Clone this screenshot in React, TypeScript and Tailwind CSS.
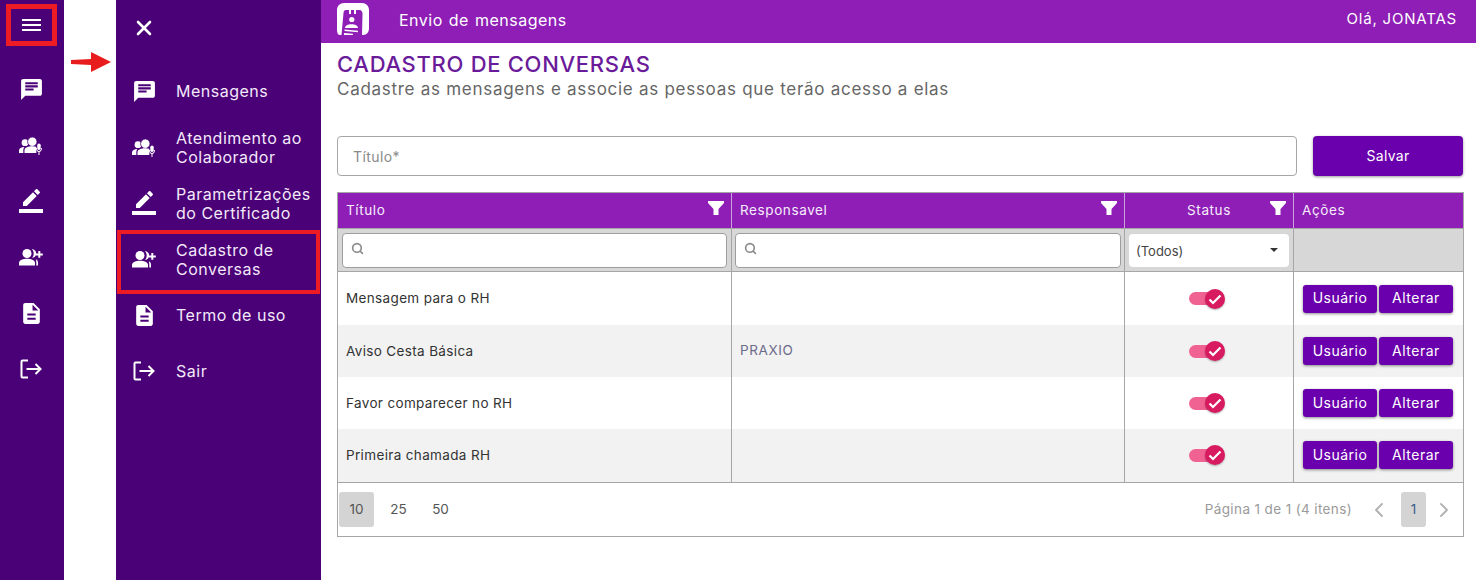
import React from 'react';
import { ChevronLeft, ChevronRight, Search, X } from 'lucide-react';

const IconMessage = ({ className }: { className?: string }) => (
    <svg viewBox="0 0 24 24" className={className} fill="currentColor">
        <path d="M20 2H4c-1.1 0-1.99.9-1.99 2L2 22l4-4h14c1.1 0 2-.9 2-2V4c0-1.1-.9-2-2-2zm-6 11H6v-2h8v2zm4-3H6V8h12v2zm0-3H6V5h12v2z" />
    </svg>
);

const IconGroupMic = ({ className }: { className?: string }) => (
    <svg viewBox="0 0 24 24" className={className} fill="currentColor">
        <circle cx="6" cy="9.7" r="3.4" />
        <path d="M0 20v-2.5c0-2 2.4-3.4 5.4-3.5-.7.9-1.1 1.9-1.1 3v3H0z" />
        <circle cx="13.3" cy="8.7" r="4.7" stroke="#4a0076" strokeWidth="0.8" />
        <path d="M5.5 20v-3c0-2.6 3.9-3.8 7.8-3.8 1.4 0 2.8.2 4 .5V20H5.500z" />
        <rect x="18.3" y="10.5" width="3.4" height="6.5" rx="1.7" />
        <path d="M17 15h.9c0 1.8.9 3 2.100 3s2.100-1.200 2.100-3h.9c0 2.200-1.100 3.700-2.500 3.900V22h-1v-3.100c-1.400-.2-2.500-1.700-2.500-3.900z" />
    </svg>
);

const IconEdit = ({ className }: { className?: string }) => (
    <svg viewBox="0 0 24 24" className={className} fill="currentColor">
        <path d="M17.75 7 14 3.25l-10 10V17h3.75l10-10zm2.96-2.96c.39-.39.39-1.02 0-1.41L18.37.29c-.39-.39-1.02-.39-1.41 0L15 2.25 18.75 6l1.96-1.96zM0 20h24v4H0z" />
    </svg>
);

const IconPersonAdd = ({ className }: { className?: string }) => (
    <svg viewBox="0 0 24 24" className={className} fill="currentColor">
        <circle cx="8" cy="8.5" r="4.5" />
        <path d="M0 20.5V18c0-3 4.500-4.200 8-4.200s8 1.200 8 4.200v2.500H0z" />
        <path d="M12.800 4c2.700.2 4.400 2.100 4.400 4.500s-1.700 4.200-4.200 4.500c1.100-1.100 1.700-2.700 1.700-4.500S14 5.100 12.800 4z" />
        <path d="M16.800 14.300c1.400.7 2.200 1.800 2.200 3.400v2.800h-1.700v-2.800c0-1.300-.2-2.500-.5-3.400z" />
        <path d="M19.300 6h2v2.400h2.500v2h-2.500v2.400h-2v-2.400h-2.400v-2h2.400z" />
    </svg>
);

const IconDoc = ({ className }: { className?: string }) => (
    <svg viewBox="0 0 24 24" className={className} fill="currentColor">
        <path d="M14 2H6c-1.1 0-1.99.9-1.99 2L4 20c0 1.1.89 2 1.99 2H18c1.1 0 2-.9 2-2V8l-6-6zm2 16H8v-2h8v2zm0-4H8v-2h8v2zm-3-5V3.500L18.500 9H13z" />
    </svg>
);

const IconExit = ({ className }: { className?: string }) => (
    <svg viewBox="0 0 24 24" className={className} fill="none" stroke="currentColor" strokeWidth="2">
        <path d="M9 3.500H3.500a1 1 0 0 0-1 1v15a1 1 0 0 0 1 1H9" />
        <path d="M7.500 12h14M16.500 7l5 5-5 5" />
    </svg>
);

const IconFilter = ({ className }: { className?: string }) => (
    <svg viewBox="0 0 16 16" className={className} fill="currentColor">
        <path d="M0 1h16v2L10.500 9v6h-5V9L0 3z" />
    </svg>
);

const Logo = () => (
    <svg viewBox="0 0 32 32" className="w-8 h-8">
        <path
            fill="#fff"
            fillRule="evenodd"
            d="M7 0h18c4 0 7 3 7 7v18c0 4-2 7-6 7h-1l.5-21c0-2-1-4-3-4H9C7.500 7 6.500 8 6.500 10L4.500 32H3c-2 0-3-2-3-5V7c0-4 3-7 7-7z"
        />
        <path fill="#fff" d="M12 4h7v7h-2V6h-3v5h-2z" />
        <circle cx="14.800" cy="16.500" r="2.600" fill="#fff" />
        <path fill="#fff" d="M8 25c0-2.500 3-3.800 6.500-3.800S21 22.500 21 25zM7.500 26.500l13.500 1.200v1.600L7.500 28.100zM7 30l9 .8V32H7z" />
    </svg>
);

const menu = [
    { icon: IconMessage, size: 'w-[25px] h-[25px]', label: 'Mensagens', text: '' },
    { icon: IconGroupMic, size: 'w-6 h-6', label: 'Atendimento ao Colaborador', text: 'pt-[2px]' },
    { icon: IconEdit, size: 'w-6 h-6', label: 'Parametrizações do Certificado', text: 'pt-[2px]' },
    { icon: IconPersonAdd, size: 'w-6 h-6', label: 'Cadastro de Conversas', text: 'pt-[2px]' },
    { icon: IconDoc, size: 'w-[25px] h-[25px]', label: 'Termo de uso', text: '' },
    { icon: IconExit, size: 'w-6 h-6', label: 'Sair', text: '' },
];

const rows = [
    { title: 'Mensagem para o RH', owner: '', h: 'h-[53px]', bg: 'bg-white', pad: '' },
    { title: 'Aviso Cesta Básica', owner: 'PRAXIO', h: 'h-[52px]', bg: 'bg-[#f2f2f2]', pad: '' },
    { title: 'Favor comparecer no RH', owner: '', h: 'h-[52px]', bg: 'bg-white', pad: '' },
    { title: 'Primeira chamada RH', owner: '', h: 'h-[53px]', bg: 'bg-[#f2f2f2]', pad: 'pb-px' },
];

const gridCols = 'grid grid-cols-[394px_393px_169px_169px]';

const ActionButton = ({ children }: { children: React.ReactNode }) => (
    <button className="w-[74px] h-7 pb-[2px] rounded-[3px] bg-[#6a00ad] text-white text-[14px] tracking-[0.5px] shadow-[0_1px_3px_rgba(0,0,0,0.45)]">
        {children}
    </button>
);

const Toggle = () => (
    <div className="relative w-9 h-5 mr-[5px] flex items-center">
        <div className="w-[26px] h-[13px] rounded-full bg-[#f06292]" />
        <div className="absolute right-0 top-0 w-5 h-5 rounded-full bg-[#d81b60] flex items-center justify-center shadow-[0_1px_2px_rgba(0,0,0,0.3)]">
            <svg viewBox="0 0 16 16" className="w-4 h-4" fill="none" stroke="#fff" strokeWidth="2.2">
                <path d="M2.500 8.500l3.500 3.500 7.500-7.500" />
            </svg>
        </div>
    </div>
);

const SearchBox = () => (
    <div className="w-full h-[35px] bg-white border border-[#9e9e9e] rounded-[4px] flex items-center pl-2">
        <Search size={13} strokeWidth={3} className="text-[#8a8a8a] -mt-[3px]" />
    </div>
);

export default function App() {
    return (
        <div className="relative flex h-[580px] w-[1476px] overflow-hidden bg-white font-['Inter',sans-serif]">
            {/* collapsed rail */}
            <aside className="w-16 shrink-0 bg-[#4a0076] text-white">
                <div className="h-[61px] w-[62px] flex items-start justify-center pt-[19px]">
                    <svg viewBox="0 0 19 12" className="w-[19px] h-3" fill="currentColor">
                        <path d="M0 0h19v2H0zM0 5h19v2H0zM0 10h19v2H0z" />
                    </svg>
                </div>
                {menu.map((m) => (
                    <div key={m.label} className="h-14 w-[62px] flex items-center justify-center">
                        <m.icon className={m.size} />
                    </div>
                ))}
            </aside>

            <div className="w-[52px] shrink-0" />

            {/* expanded menu */}
            <aside className="w-[205px] shrink-0 bg-[#4a0076] text-[#f3e9fa]">
                <div className="h-[63px] w-14 flex items-start justify-center pt-4">
                    <X size={24} strokeWidth={2.6} className="text-white" />
                </div>
                {menu.map((m) => (
                    <div key={m.label} className="h-14 flex items-center">
                        <div className="w-14 shrink-0 flex justify-center text-white">
                            <m.icon className={m.size} />
                        </div>
                        <span className={`ml-1 w-[145px] text-[16px] leading-[19px] tracking-[0.5px] ${m.text}`}>{m.label}</span>
                    </div>
                ))}
            </aside>

            <main className="flex-1 min-w-0">
                <header className="h-[43px] bg-[#8e1eb6] text-white flex pl-4 pr-[19px]">
                    <div className="pt-[3px]">
                        <Logo />
                    </div>
                    <span className="ml-[30px] mt-[10px] text-[16px] leading-5 tracking-[0.5px] [word-spacing:1px]">Envio de mensagens</span>
                    <span className="ml-auto mt-[9px] text-[15px] leading-5 tracking-[0.8px]">Olá, JONATAS</span>
                </header>

                <div className="pl-4 pr-[13px]">
                    <h1 className="mt-2 text-[22px] leading-[26px] text-[#6a1b9a] font-medium tracking-[0.7px]">CADASTRO DE CONVERSAS</h1>
                    <p className="mt-[2px] text-[17px] leading-[21px] text-[#666666] tracking-[0.72px]">Cadastre as mensagens e associe as pessoas que terão acesso a elas</p>

                    <div className="mt-9 flex gap-4">
                        <div className="w-[960px] h-10 border border-[#a6a6a6] rounded-[4px] flex items-center pl-[15px] text-[14px] text-[#8a8a8a] tracking-[0.4px]">
                            Título*
                        </div>
                        <button className="w-[150px] h-10 pb-[2px] rounded-[4px] bg-[#6a00ad] text-white text-[14px] tracking-[0.3px] shadow-[0_1px_3px_rgba(0,0,0,0.4)]">
                            Salvar
                        </button>
                    </div>

                    <div className="mt-4 w-[1127px] border border-[#a6a6a6] text-[13.5px]">
                        <div className={`${gridCols} h-9 bg-[#8e1eb6] text-[#f6ecfb] tracking-[0.6px] border-b border-[#a6a6a6]`}>
                            <div className="relative flex items-center pl-2 border-r border-[#c9a3dc]">
                                Título
                                <IconFilter className="absolute right-[7px] top-[7px] w-4 h-4 text-white" />
                            </div>
                            <div className="relative flex items-center pl-2 border-r border-[#c9a3dc]">
                                Responsavel
                                <IconFilter className="absolute right-[7px] top-[7px] w-4 h-4 text-white" />
                            </div>
                            <div className="relative flex items-center justify-center border-r border-[#c9a3dc]">
                                Status
                                <IconFilter className="absolute right-[7px] top-[7px] w-4 h-4 text-white" />
                            </div>
                            <div className="flex items-center pl-2">Ações</div>
                        </div>

                        <div className={`${gridCols} h-[43px] bg-[#d7d7d7] border-b border-[#a6a6a6]`}>
                            <div className="flex items-center pl-1 pr-1 border-r border-[#a6a6a6]">
                                <SearchBox />
                            </div>
                            <div className="flex items-center pl-[3px] pr-[3px] border-r border-[#a6a6a6]">
                                <SearchBox />
                            </div>
                            <div className="flex items-center px-1 border-r border-[#a6a6a6]">
                                <div className="w-[160px] h-[33px] bg-white rounded-[4px] flex items-center justify-between pl-[7px] pr-[11px] pt-1 text-[13px] text-[#444444]">
                                    (Todos)
                                    <div className="w-0 h-0 -mt-[5px] border-x-[4px] border-x-transparent border-t-[4px] border-t-[#333333]" />
                                </div>
                            </div>
                            <div />
                        </div>

                        {rows.map((r) => (
                            <div key={r.title} className={`${gridCols} ${r.h} ${r.bg}`}>
                                <div className={`flex items-center pl-2 text-[#333333] tracking-[0.35px] border-r border-[#a6a6a6] ${r.pad}`}>{r.title}</div>
                                <div className={`flex items-center pl-2 pb-[2px] text-[#6b6b8a] tracking-[0.6px] border-r border-[#a6a6a6]`}>{r.owner}</div>
                                <div className={`flex items-center justify-center border-r border-[#a6a6a6] ${r.pad}`}>
                                    <Toggle />
                                </div>
                                <div className={`flex items-center gap-[2px] pl-[9px] ${r.pad}`}>
                                    <ActionButton>Usuário</ActionButton>
                                    <ActionButton>Alterar</ActionButton>
                                </div>
                            </div>
                        ))}

                        <div className="h-[54px] border-t border-[#a6a6a6] flex items-center pl-[1px] pr-[7px] text-[#555555]">
                            <div className="w-[35px] h-[35px] rounded-[3px] bg-[#d4d4d4] flex items-center justify-center">10</div>
                            <div className="w-[49px] text-center">25</div>
                            <div className="w-[35px] text-center">50</div>
                            <span className="ml-auto text-[#9a9a9a] tracking-[0.38px]">Página 1 de 1 (4 itens)</span>
                            <ChevronLeft size={24} strokeWidth={1.8} className="ml-[15px] text-[#b0b0b0]" />
                            <div className="ml-[10px] w-[25px] h-[35px] rounded-[3px] bg-[#d4d4d4] flex items-center justify-center text-[#3b5f8a]">1</div>
                            <ChevronRight size={24} strokeWidth={1.8} className="ml-[6px] text-[#b0b0b0]" />
                        </div>
                    </div>
                </div>
            </main>

            {/* annotations drawn over the screenshot */}
            <div className="absolute left-[6px] top-1 w-[51px] h-[42px] border-[5px] border-[#ed1c24]" />
            <div className="absolute left-[117px] top-[230px] w-[203px] h-[64px] border-[4px] border-[#ed1c24]" />
            <svg viewBox="0 0 42 22" className="absolute left-[70px] top-[51px] w-[42px] h-[22px]">
                <path d="M1 9l20-1V1l20 10-20 10v-7l-20-1z" fill="#e81c1c" />
            </svg>
        </div>
    );
}
